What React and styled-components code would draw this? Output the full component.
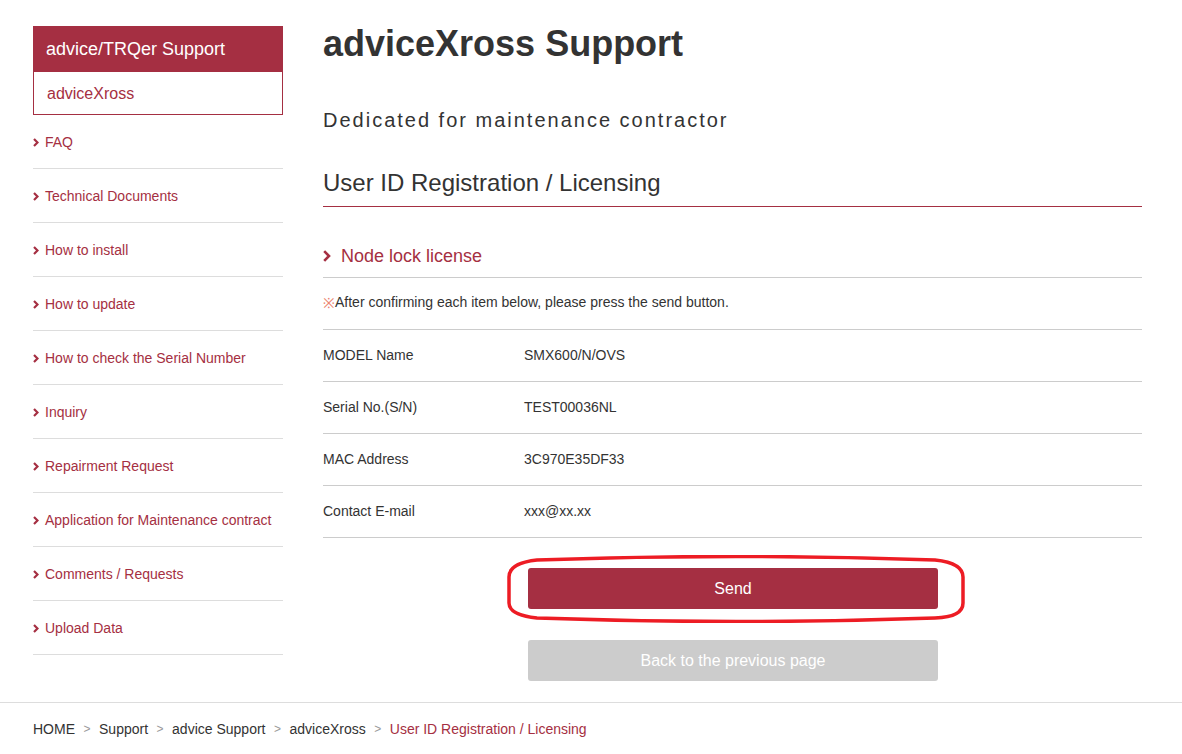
import React from "react"
import styled, { createGlobalStyle } from "styled-components"

const RED = "#a52f42"

const GlobalStyle = createGlobalStyle`
  html, body {
    margin: 0;
    padding: 0;
    background: #fff;
    font-family: "Liberation Sans", Arial, sans-serif;
    color: #333;
  }
  * {
    box-sizing: border-box;
  }
`

const navItems = [
  "FAQ",
  "Technical Documents",
  "How to install",
  "How to update",
  "How to check the Serial Number",
  "Inquiry",
  "Repairment Request",
  "Application for Maintenance contract",
  "Comments / Requests",
  "Upload Data",
]

const rows = [
  ["MODEL Name", "SMX600/N/OVS"],
  ["Serial No.(S/N)", "TEST00036NL"],
  ["MAC Address", "3C970E35DF33"],
  ["Contact E-mail", "xxx@xx.xx"],
]

const crumbs = ["HOME", "Support", "advice Support", "adviceXross"]

const Chevron = ({ size = "small" }) =>
  size === "small" ? (
    <svg width="6" height="9" viewBox="0 0 6 9">
      <polyline points="1,1 4.5,4.5 1,8" fill="none" stroke={RED} strokeWidth="2.2" />
    </svg>
  ) : (
    <svg width="8" height="12" viewBox="0 0 8 12">
      <polyline points="1.2,1.2 6,6 1.2,10.8" fill="none" stroke={RED} strokeWidth="2.6" />
    </svg>
  )

const App = () => {
  return (
    <>
      <GlobalStyle />
      <Page>
        <Sidebar>
          <SideHeader>advice/TRQer Support</SideHeader>
          <SideSub>adviceXross</SideSub>
          <NavList>
            {navItems.map((item) => (
              <NavItem key={item}>
                <Chevron />
                <span>{item}</span>
              </NavItem>
            ))}
          </NavList>
        </Sidebar>
        <Main>
          <Title>adviceXross Support</Title>
          <Subtitle>Dedicated for maintenance contractor</Subtitle>
          <SectionTitle>User ID Registration / Licensing</SectionTitle>
          <SubHeading>
            <Chevron size="large" />
            <span>Node lock license</span>
          </SubHeading>
          <Note>
            <Mark>※</Mark>After confirming each item below, please press the send button.
          </Note>
          {rows.map(([label, value]) => (
            <Row key={label}>
              <Label>{label}</Label>
              <Value>{value}</Value>
            </Row>
          ))}
          <Buttons>
            <SendWrap>
              <Button primary>Send</Button>
              <Circle width="458" height="68" viewBox="0 0 458 68">
                <path
                  d="M 2 22 Q 2 8 30 5 Q 229 -2 428 5 Q 456 8 456 22 L 456 48 Q 456 62 428 63 Q 229 70 30 63 Q 2 60 2 48 Z"
                  fill="none"
                  stroke="#ed1c24"
                  strokeWidth="3.5"
                />
              </Circle>
            </SendWrap>
            <Button>Back to the previous page</Button>
          </Buttons>
        </Main>
      </Page>
      <Footer>
        <Crumbs>
          {crumbs.map((c) => (
            <React.Fragment key={c}>
              <span>{c}</span>
              <Sep>&gt;</Sep>
            </React.Fragment>
          ))}
          <Current>User ID Registration / Licensing</Current>
        </Crumbs>
      </Footer>
    </>
  )
}

const Page = styled.div`
  display: flex;
  align-items: flex-start;
  padding: 26px 0 0 33px;
`

const Sidebar = styled.aside`
  width: 250px;
  flex-shrink: 0;
`

const SideHeader = styled.div`
  height: 46px;
  background: ${RED};
  color: #fff;
  font-size: 18px;
  display: flex;
  align-items: center;
  padding-left: 13px;
`

const SideSub = styled.div`
  height: 43px;
  border: 1px solid ${RED};
  border-top: none;
  color: ${RED};
  font-size: 16px;
  display: flex;
  align-items: center;
  padding: 2px 0 0 13px;
`

const NavList = styled.ul`
  list-style: none;
  margin: 0;
  padding: 0;
`

const NavItem = styled.li`
  height: 54px;
  border-bottom: 1px solid #ddd;
  display: flex;
  align-items: center;
  gap: 6px;
  color: ${RED};
  font-size: 14px;

  svg {
    flex-shrink: 0;
    margin-top: 1px;
  }
`

const Main = styled.main`
  width: 819px;
  margin-left: 40px;
`

const Title = styled.h1`
  margin: -2px 0 0;
  font-size: 36px;
  line-height: 40px;
  font-weight: bold;
  color: #333;
`

const Subtitle = styled.p`
  margin: 42px 0 0;
  font-size: 20px;
  line-height: 28px;
  letter-spacing: 2px;
  color: #333;
`

const SectionTitle = styled.h2`
  margin: 33px 0 0;
  font-size: 24px;
  line-height: 32px;
  font-weight: normal;
  color: #333;
  padding-bottom: 7px;
  border-bottom: 1px solid ${RED};
`

const SubHeading = styled.h3`
  margin: 37px 0 0;
  font-size: 18px;
  line-height: 24px;
  font-weight: normal;
  color: ${RED};
  display: flex;
  align-items: center;
  gap: 10px;
  padding-bottom: 9px;
  border-bottom: 1px solid #ccc;
`

const Note = styled.p`
  margin: 0;
  height: 52px;
  display: flex;
  align-items: center;
  font-size: 14px;
  color: #333;
  padding-bottom: 3px;
  border-bottom: 1px solid #ccc;
`

const Mark = styled.span`
  color: #ec8470;
`

const Row = styled.div`
  height: 52px;
  display: grid;
  grid-template-columns: 201px 1fr;
  align-items: center;
  font-size: 14px;
  padding-bottom: 2px;
  border-bottom: 1px solid #ccc;
`

const Label = styled.span`
  color: #333;
`

const Value = styled.span`
  color: #333;
`

const Buttons = styled.div`
  display: flex;
  flex-direction: column;
  align-items: center;
  gap: 31px;
  padding-top: 30px;
  padding-left: 1px;
`

const SendWrap = styled.div`
  position: relative;
`

const Circle = styled.svg`
  position: absolute;
  left: -21px;
  top: -13px;
  pointer-events: none;
`

const Button = styled.button`
  width: 410px;
  height: 41px;
  border: none;
  border-radius: 3px;
  background: ${(p) => (p.primary ? RED : "#ccc")};
  color: #fff;
  font-family: "Liberation Sans", Arial, sans-serif;
  font-size: 16px;
  cursor: pointer;
  display: block;
`

const Footer = styled.footer`
  margin-top: 21px;
  border-top: 1px solid #ddd;
  padding: 16px 0 0 33px;
`

const Crumbs = styled.div`
  display: flex;
  align-items: center;
  font-size: 14px;
  line-height: 20px;
  color: #333;
`

const Sep = styled.span`
  color: #999;
  font-size: 12px;
  margin: 0 8.5px;
`

const Current = styled.span`
  color: ${RED};
`

export default App
